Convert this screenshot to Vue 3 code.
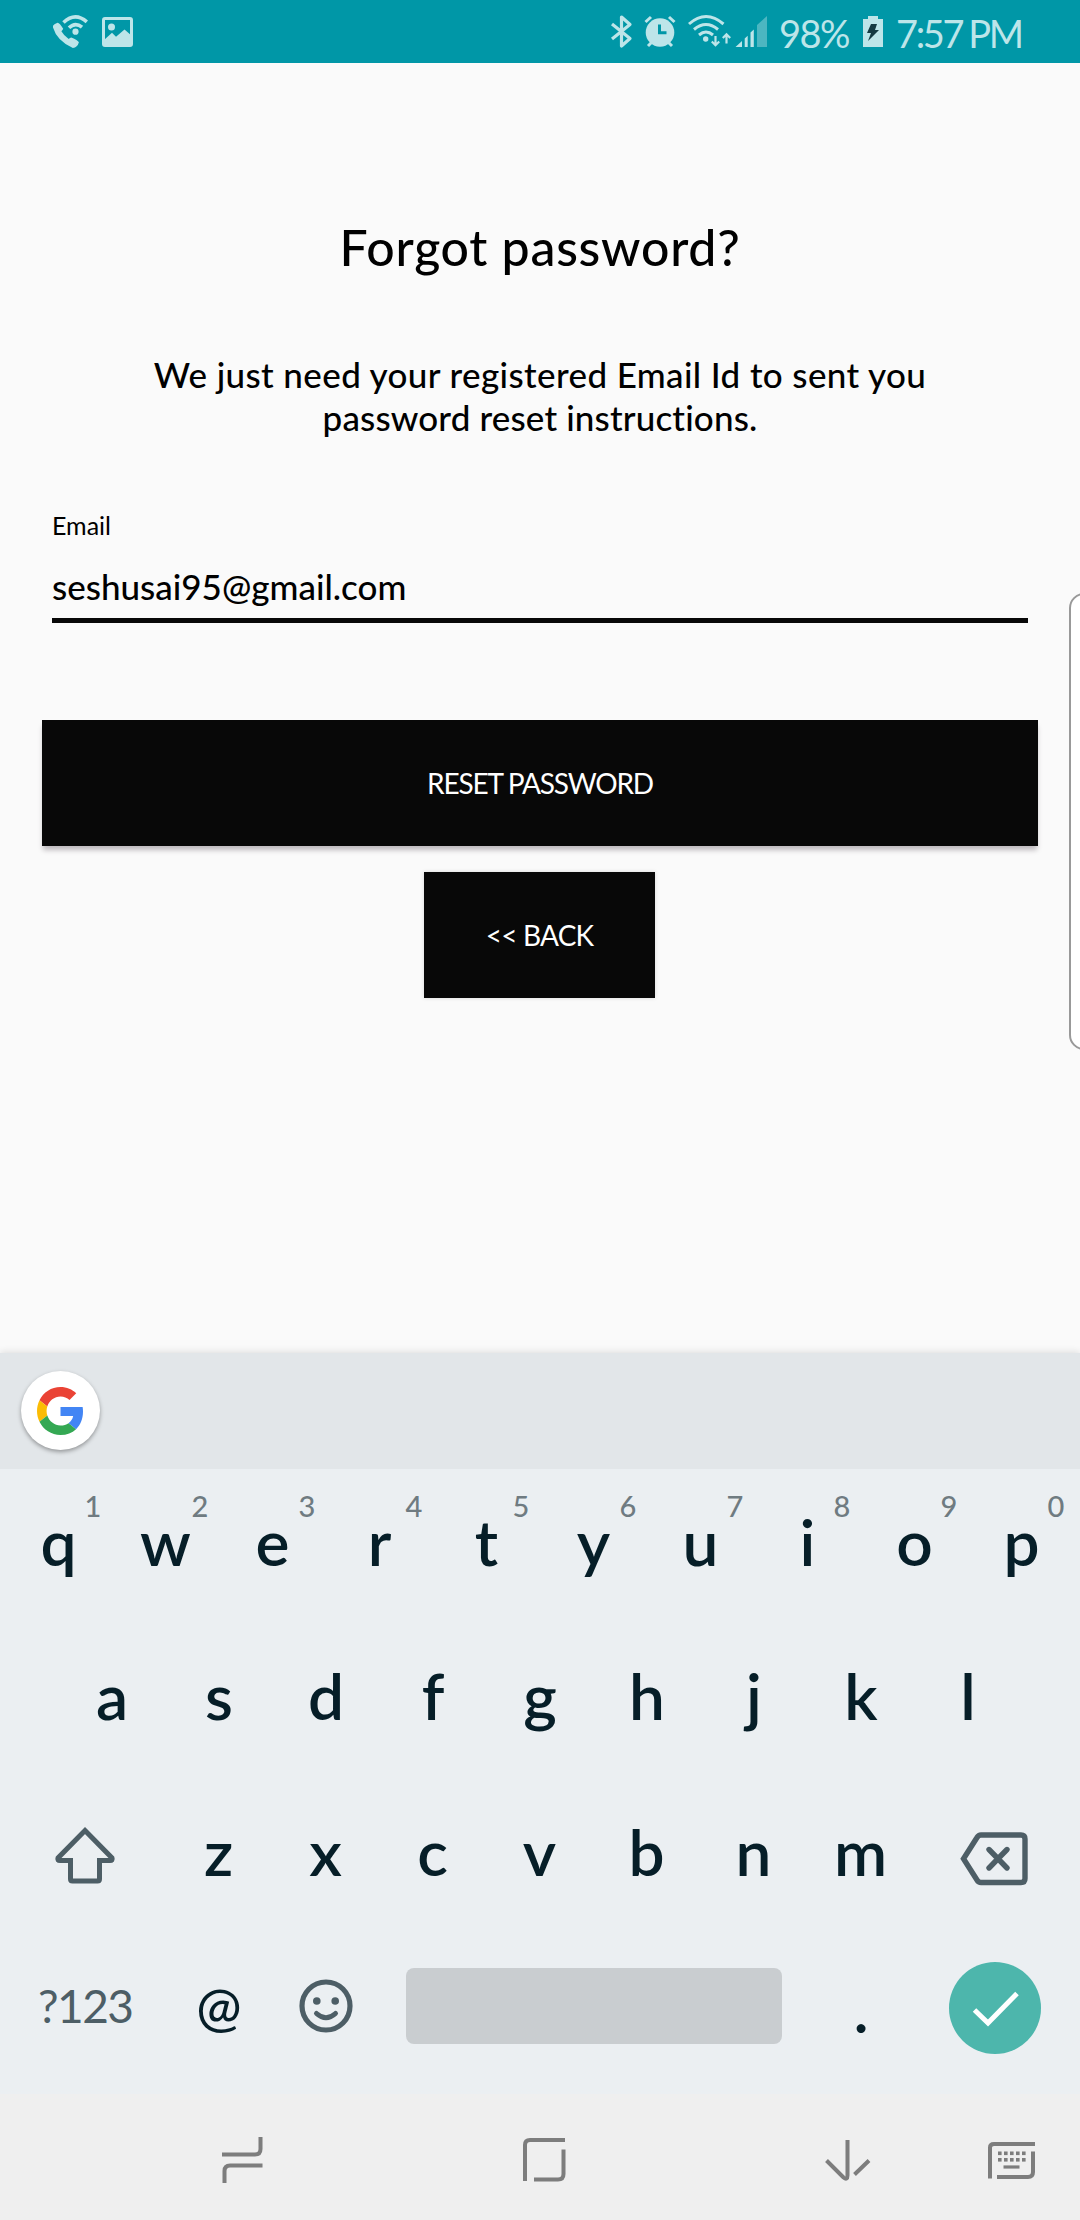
<script setup>
const topRow = [...'qwertyuiop'].map((letter, i) => ({ letter, hint: (i + 1) % 10 }))
const middleRow = [...'asdfghjkl']
const bottomRow = [...'zxcvbnm']
const dots = [0, 1, 2, 3, 4]
</script>

<template>
  <div class="screen">
    <header class="status">
      <svg class="phone" width="36" height="36" viewBox="53 14 36 36">
        <path d="M53 27.500q-1-3 4.500-4.800 2-.2 5.700 6-.5 1.300-1.800 2.600 2.500 4.500 7.300 7.700 1.300-1.500 2.600-1.500 6.500 2.700 7.600 4.700-1.500 5.300-6 5.800Q57 41 53 27.500z" fill="#bde5e9" />
        <g fill="none" stroke="#bde5e9" stroke-width="3.600">
          <path d="M63.500 22.500q11.500-11 23.300-.7M69 27.800q6.300-6.200 13-.6" />
        </g>
        <circle cx="75.500" cy="31.700" r="3.100" fill="#bde5e9" />
      </svg>
      <svg class="photo" width="31" height="30" viewBox="0 0 31 30">
        <rect x="1.500" y="1.500" width="28" height="27" rx="1.500" fill="none" stroke="#bde5e9" stroke-width="3" />
        <circle cx="9.500" cy="10" r="3.500" fill="#bde5e9" />
        <path d="M2 23l8-7.300 4 4 8.500-7.200L30 19v10H2z" fill="#bde5e9" />
      </svg>
      <svg class="system" width="160" height="36" viewBox="609 14 160 36">
        <path d="M612 24l18 14.500-8.500 7.500V17l8.500 7.500L612 39" fill="none" stroke="#bde5e9" stroke-width="3.200" stroke-linejoin="round" />
        <circle cx="660" cy="32.500" r="14.300" fill="#bde5e9" />
        <path d="M645.500 22l5.500-5M669 17l5.500 5M648 46l4-4M672 46l-4-4" stroke="#bde5e9" stroke-width="3" />
        <path d="M659.500 24.500v8.200h7" fill="none" stroke="#0097a7" stroke-width="3" />
        <g fill="none" stroke="#bde5e9" stroke-width="3">
          <path d="M689 24q17-15 34.500 0M694 29.500q12-10 24 0M699 35q7-6 14 0" />
          <path d="M715.500 36v8.500M711.800 41.500l3.700 3.700 3.700-3.700M726.500 43.500v-8.500M722.800 38l3.700-3.700 3.700 3.700" stroke-width="2.200" />
        </g>
        <circle cx="705.700" cy="39" r="2.700" fill="#bde5e9" />
        <path d="M757 25l10-9v31h-10z" fill="#4cb6c1" />
        <path d="M735.500 47l6.500-6v6zM744.700 38.500l3-2.700V47h-3zM750.500 32.500l3.300-3V47h-3.300z" fill="#bde5e9" />
      </svg>
      <span class="percent">98%</span>
      <svg class="battery" width="22" height="33" viewBox="0 0 22 33">
        <path d="M1 4h5V1h10v3h5v28H1z" fill="#bde5e9" />
        <path d="M9 9h6l-2 6h4L6 26l3-8H5z" fill="#143a42" />
      </svg>
      <span class="clock">7:57 PM</span>
    </header>

    <main class="page">
      <h1>Forgot password?</h1>
      <p class="lead"><span class="l1">We just need your registered Email Id to sent you</span><br /><span class="l2">password reset instructions.</span></p>
      <label class="label">Email</label>
      <div class="field"><span>seshusai95@gmail.com</span></div>
      <button class="btn reset"><span>RESET PASSWORD</span></button>
      <button class="btn back"><span>&lt;&lt; BACK</span></button>
      <div class="edge"></div>
    </main>

    <section class="keyboard">
      <div class="suggest">
        <div class="google">
          <svg width="47" height="48" viewBox="0 0 48 48" preserveAspectRatio="none">
            <path fill="#ea4335" d="M24 9.500c3.540 0 6.710 1.220 9.210 3.600l6.850-6.850C35.900 2.380 30.470 0 24 0 14.620 0 6.510 5.380 2.560 13.220l7.980 6.190C12.430 13.720 17.740 9.500 24 9.500z" />
            <path fill="#4285f4" d="M46.980 24.550c0-1.570-.15-3.090-.38-4.550H24v9.020h12.940c-.58 2.960-2.260 5.480-4.780 7.180l7.730 6c4.510-4.180 7.090-10.360 7.090-17.650z" />
            <path fill="#fbbc05" d="M10.530 28.590c-.48-1.450-.76-2.990-.76-4.590s.27-3.140.76-4.590l-7.980-6.190C.92 16.460 0 20.120 0 24c0 3.880.92 7.540 2.560 10.780l7.970-6.190z" />
            <path fill="#34a853" d="M24 48c6.480 0 11.930-2.130 15.890-5.810l-7.730-6c-2.150 1.450-4.920 2.300-8.160 2.300-6.260 0-11.570-4.220-13.470-9.910l-7.980 6.190C6.510 42.620 14.620 48 24 48z" />
          </svg>
        </div>
      </div>
      <div class="row first">
        <div v-for="k in topRow" :key="k.letter" class="key">{{ k.letter }}<sup>{{ k.hint }}</sup></div>
      </div>
      <div class="row second">
        <div v-for="k in middleRow" :key="k" class="key">{{ k }}</div>
      </div>
      <div class="row third">
        <div class="wide">
          <svg width="160" height="155" viewBox="5 1773 160 155">
            <path d="M85 1830.500l27 27.500q1 2.500-2 2.500h-10.500v18.500q0 2-2 2h-25q-2 0-2-2v-18.500H60q-3 0-2-2.500z" fill="none" stroke="#4d5e66" stroke-width="5" />
          </svg>
        </div>
        <div v-for="k in bottomRow" :key="k" class="key">{{ k }}</div>
        <div class="wide">
          <svg width="161" height="155" viewBox="913.500 1773 161 155">
            <path d="M980.500 1835h40q4 0 4 4v39.500q0 4-4 4h-40q-2.500 0-4-2.500l-13.500-21.300 13.500-21.200q1.500-2.500 4-2.500z" fill="none" stroke="#4d5e66" stroke-width="5.400" />
            <path d="M988.500 1849.500l18 18.500M1006.500 1849.500l-18 18.500" stroke="#4d5e66" stroke-width="5.400" stroke-linecap="round" />
          </svg>
        </div>
      </div>
      <div class="row last">
        <div class="wide symbols">?123</div>
        <div class="key at">@</div>
        <div class="key">
          <svg width="54" height="54" viewBox="0 0 54 54">
            <circle cx="27" cy="27" r="24" fill="none" stroke="#4d5e66" stroke-width="5.200" />
            <circle cx="17.800" cy="22" r="3.800" fill="#4d5e66" />
            <circle cx="36.200" cy="22" r="3.800" fill="#4d5e66" />
            <path d="M17.500 34.500q9.500 8.500 19 0" fill="none" stroke="#4d5e66" stroke-width="5" stroke-linecap="round" />
          </svg>
        </div>
        <div class="space"></div>
        <div class="key period">.</div>
        <div class="wide">
          <div class="done">
            <svg width="92" height="92" viewBox="948 1962 92 92">
              <path d="M973.500 2010l13.500 13 29-29.500" fill="none" stroke="#fff" stroke-width="5" />
            </svg>
          </div>
        </div>
      </div>
    </section>

    <nav class="nav">
      <svg width="1080" height="126" viewBox="0 2094 1080 126">
        <g fill="none" stroke="#7d7d7d" stroke-width="4">
          <path d="M222 2154.500h33q5.500 0 5.500-5.500v-12M262.500 2165.500h-32.500q-5.500 0-5.500 5.500v12" />
          <path d="M525 2181v-36q0-5 5-5h35M534 2179.500h24q5.500 0 5.500-5.500v-24.500" />
          <path d="M826.500 2160.500l17 17q4 3 4-2v-35.500M869 2160.500l-14.500 14" />
          <path d="M990 2178.500v-31q0-3.500 4-3.500h41M997 2177h31q5 0 5-5v-20.500" />
          <path d="M1003.500 2167h16" stroke-width="3.200" />
        </g>
        <g fill="#7d7d7d">
          <rect v-for="d in dots" :key="'a' + d" :x="998 + d * 6" y="2151.500" width="3.600" height="3.600" />
          <rect v-for="d in dots" :key="'b' + d" :x="998 + d * 6" y="2158" width="3.600" height="3.600" />
        </g>
      </svg>
    </nav>
  </div>
</template>

<style>
body { margin: 0; background: #fafafa; }
</style>

<style scoped>
.screen {
  width: 1080px; height: 2220px; overflow: hidden;
  display: flex; flex-direction: column;
  background: #fafafa; color: #000;
  font-family: Lato, "Liberation Sans", sans-serif;
}
svg { display: block; flex: none; }
.status {
  height: 63px; flex: none; box-sizing: border-box; padding-left: 53px;
  display: flex; align-items: center;
  background: #0097a7; color: #bde5e9; white-space: nowrap;
}
.photo { margin-left: 13px; }
.system { margin-left: 476px; }
.percent { margin-left: 10px; width: 83px; font-size: 38px; line-height: 64px; letter-spacing: -1.5px; padding-top: 2px; }
.clock { margin-left: 12px; font-size: 38px; line-height: 64px; letter-spacing: -2.4px; word-spacing: -1px; padding-top: 2px; }
.page {
  position: relative; height: 1290px; flex: none; box-sizing: border-box;
  padding: 154px 42px 0; display: flex; flex-direction: column; align-items: center;
}
h1 { margin: 0; font-size: 50px; line-height: 60px; font-weight: 500; letter-spacing: .75px; white-space: nowrap; }
.lead { margin: 76px 0 0; font-size: 35px; line-height: 43px; font-weight: 500; text-align: center; white-space: nowrap; }
.l1 { letter-spacing: .38px; }
.l2 { letter-spacing: .15px; }
.label { align-self: flex-start; margin: 71px 0 0 10px; font-size: 25px; line-height: 30px; }
.field {
  align-self: stretch; margin: 21px 10px 0; height: 57px; border-bottom: 5px solid #080808;
  font-size: 35px; line-height: 50px; font-weight: 500;
}
.btn {
  flex: none; border: 0; border-radius: 0; padding: 0; height: 126px;
  display: flex; align-items: center; justify-content: center;
  background: #080808; color: #fff; font: 28px/40px Lato, "Liberation Sans", sans-serif;
}
.reset { width: 996px; margin-top: 97px; letter-spacing: -1.2px; box-shadow: 0 5px 5px -1px #bdb9bd; }
.back { width: 231px; margin: 26px 0 0 -1px; letter-spacing: -.8px; box-shadow: 0 0 4px #d8d8d8; }
.edge {
  position: absolute; left: 1069px; top: 530px; width: 30px; height: 453px;
  border: 2px solid #999; border-radius: 15px; background: #fff;
}
.keyboard { position: relative; height: 741px; flex: none; background: #ebeff2; color: #061e28; box-shadow: 0 -1px 7px rgba(0, 0, 0, .12); }
.suggest { height: 116px; box-sizing: border-box; padding: 18px 21px; background: #e2e6e9; }
.google {
  width: 79px; height: 79px; border-radius: 50%; background: #fff;
  display: flex; align-items: center; justify-content: center;
  box-shadow: 0 2px 4px rgba(0, 0, 0, .35);
}
.row { height: 155px; box-sizing: border-box; padding: 0 5px; display: flex; align-items: center; }
.first { height: 149px; padding-bottom: 3px; }
.second { padding-left: 58.5px; }
.third .key { padding-top: 2px; }
.last { height: 166px; padding-bottom: 11px; }
.key {
  position: relative; width: 107px; height: 80px; flex: none;
  display: flex; justify-content: center; align-items: center;
  font-size: 64px; line-height: 80px; font-weight: 600;
}
sup { position: absolute; left: 73px; top: -14px; width: 30px; text-align: center; font-size: 29px; line-height: 36px; font-weight: 500; color: #6f7b81; }
.wide { flex: 1 1 0; display: flex; justify-content: center; align-items: center; }
.symbols { font-size: 46px; line-height: 60px; color: #4d5e66; letter-spacing: -1.5px; }
.at { font-size: 54px; font-weight: 500; }
.period { top: 3px; }
.space { width: 376px; height: 76px; margin: 0 26px; flex: none; border-radius: 8px; background: #c9cdd0; }
.done { width: 92px; height: 92px; margin-top: 4px; border-radius: 50%; background: #4db6ac; }
.nav { position: relative; height: 126px; flex: none; background: #efefef; }
</style>
